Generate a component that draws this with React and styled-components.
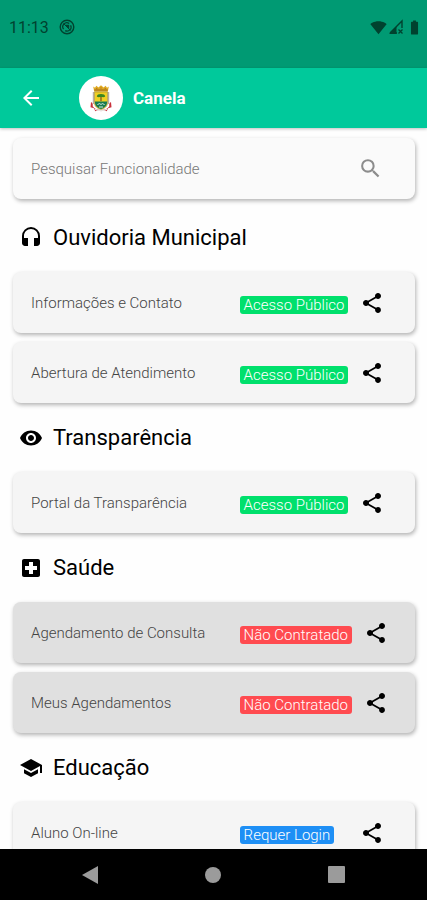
import styled, { createGlobalStyle } from 'styled-components'
import {
    MdArrowBack,
    MdBatteryFull,
    MdHeadset,
    MdLocalHospital,
    MdSchool,
    MdSearch,
    MdShare,
    MdSignalWifi4Bar,
    MdVisibility,
} from 'react-icons/md'

const GlobalStyle = createGlobalStyle`
    * {
        box-sizing: border-box;
    }
    body {
        margin: 0;
        background: #fefefe;
        font-family: Roboto, sans-serif;
        color: #000;
    }
    button {
        display: flex;
        align-items: center;
        justify-content: center;
        padding: 0;
        border: 0;
        background: none;
        color: inherit;
        cursor: pointer;
    }
`

const Screen = styled.div`
    display: flex;
    flex-direction: column;
    height: 100vh;
`

const StatusBar = styled.div`
    display: flex;
    align-items: flex-start;
    flex-shrink: 0;
    height: 68px;
    padding: 18px 4px 0 9px;
    background: #009a73;
    color: #00422f;
    font-size: 16px;
    line-height: 20px;
`

const StatusIcons = styled.div`
    display: flex;
    align-items: center;
    height: 18px;
    margin-left: ${props => (props.$end ? 'auto' : '10px')};
    gap: 1px;
`

const AppBar = styled.header`
    display: flex;
    align-items: center;
    flex-shrink: 0;
    height: 60px;
    padding: 0 19px;
    background: #00c99b;
    color: #fff;
    box-shadow: 0 1px 3px rgba(0, 0, 0, 0.25);
    z-index: 1;
`

const BackButton = styled.button`
    width: 24px;
    height: 24px;
`

const Avatar = styled.div`
    display: flex;
    align-items: center;
    justify-content: center;
    width: 44px;
    height: 44px;
    margin: 0 10px 0 36px;
    border-radius: 50%;
    background: #fff;
`

const Title = styled.h1`
    margin: 0;
    font-size: 17px;
    font-weight: 700;
    line-height: 24px;
`

const Content = styled.main`
    flex: 1;
    min-height: 0;
    padding: 10px 12px 0 13px;
    overflow-y: auto;
    scrollbar-width: none;
`

const Card = styled.div`
    display: flex;
    align-items: center;
    height: 61px;
    padding: 0 18px;
    border-radius: 8px;
    background: ${props => props.$background || '#f5f5f5'};
    box-shadow: 1px 2px 4px rgba(0, 0, 0, 0.3);
`

const SearchCard = styled(Card)`
    margin-bottom: 4px;
    padding-right: 32px;
    color: #8c8c8c;
`

const SearchInput = styled.input`
    flex: 1;
    min-width: 0;
    padding: 0;
    border: 0;
    outline: 0;
    background: none;
    color: #333;
    font: 300 15px/20px Roboto, sans-serif;

    &::placeholder {
        color: #777;
        opacity: 1;
    }
`

const SectionTitle = styled.h2`
    display: flex;
    align-items: center;
    gap: 10px;
    height: 69px;
    margin: 0;
    padding-left: 6px;
    font-size: 22px;
    font-weight: 400;
    line-height: 28px;
`

const List = styled.ul`
    display: flex;
    flex-direction: column;
    gap: 9px;
    margin: 0;
    padding: 0;
    list-style: none;
`

const Label = styled.span`
    flex: 0 0 57%;
    color: #444;
    font-size: 15px;
    font-weight: 300;
    line-height: 20px;
`

const BadgeSlot = styled.span`
    min-width: 108px;
    padding-top: 5px;
`

const Badge = styled.span`
    display: block;
    width: fit-content;
    padding: 0 4px;
    border-radius: 3px;
    background: ${props => props.$color};
    color: #fff;
    font-size: 15px;
    font-weight: 300;
    line-height: 18px;
    white-space: nowrap;
`

const ShareButton = styled.button`
    flex-shrink: 0;
    width: 24px;
    height: 24px;
    margin-left: 12px;
`

const NavBar = styled.nav`
    display: grid;
    grid-template-columns: repeat(3, 1fr);
    flex-shrink: 0;
    height: 51px;
    padding: 0 28px;
    background: #000;
    color: #9b9b9b;
`

const access = {
    public: { text: 'Acesso Público', color: '#00e06c' },
    unavailable: { text: 'Não Contratado', color: '#ff4b50', background: '#e0e0e0' },
    login: { text: 'Requer Login', color: '#1e8ff5' },
}

const sections = [
    {
        title: 'Ouvidoria Municipal',
        icon: MdHeadset,
        items: [
            { label: 'Informações e Contato', access: 'public' },
            { label: 'Abertura de Atendimento', access: 'public' },
        ],
    },
    {
        title: 'Transparência',
        icon: MdVisibility,
        items: [{ label: 'Portal da Transparência', access: 'public' }],
    },
    {
        title: 'Saúde',
        icon: MdLocalHospital,
        items: [
            { label: 'Agendamento de Consulta', access: 'unavailable' },
            { label: 'Meus Agendamentos', access: 'unavailable' },
        ],
    },
    {
        title: 'Educação',
        icon: MdSchool,
        items: [{ label: 'Aluno On-line', access: 'login' }],
    },
]

const SyncIcon = () => (
    <svg width="16" height="16" viewBox="0 0 16 16" fill="none" stroke="currentColor">
        <circle cx="8" cy="8" r="6.8" strokeWidth="1.4" />
        <path d="M4.6 10.2a4 4 0 0 1 5.6-5.6M11.6 6.2a4 4 0 0 1-5.4 5.4" strokeWidth="1.3" />
        <path d="M6 5.800h4.200V10z" fill="currentColor" stroke="none" />
        <path d="M4.500 4.500l7 7" strokeWidth="1" />
    </svg>
)

const SignalIcon = () => (
    <svg width="17" height="16" viewBox="0 0 17 16" fill="none" stroke="currentColor">
        <path d="M2 14L14 2v7M2 14h7" strokeWidth="1.4" />
        <path d="M1 15l7.500-7.500V15z" fill="currentColor" stroke="none" />
        <path d="M10.500 10.500l4 4M14.500 10.500l-4 4" strokeWidth="1.3" />
    </svg>
)

const Crest = () => (
    <svg width="22" height="27" viewBox="0 0 22 27">
        <path d="M3.2 1.6l1.8 1.2L6.4.8l2 1.7L11 .3l2.6 2.2 2-1.7L17 2.8l1.8-1.2-1 5.2H4.2z" fill="#dfaa22" />
        <path d="M4.4 5h13.2" stroke="#9b651d" />
        <path d="M6 3.6h1.4M10.2 3h1.6M14.6 3.6H16" stroke="#b97820" />
        <path d="M1 17c1.6.8 2 2 1.7 4.2 2 2.9 4.4 3.8 8.3 3.8s6.3-.9 8.3-3.8C19 19 19.4 17.8 21 17l.5 5.2-3.5 1-1.2 3-3.8-1.4-2 1.5-2-1.5-3.8 1.4-1.2-3-3.5-1z" fill="#c9313c" />
        <path d="M2.8 7h1.4v12H2.8zM17.800 7h1.400v12h-1.400z" fill="#b9aca0" />
        <path d="M4.500 7h13v10.500c0 4-2.700 5.900-6.500 7-3.800-1.100-6.500-3-6.500-7z" fill="#f1cf22" stroke="#9d8b39" strokeWidth=".6" />
        <path d="M4.900 16.500h12.200c0 4-2 6-6.100 7.500-4.100-1.500-6.100-3.500-6.100-7.500z" fill="#167a51" />
        <path d="M11 10.500v5.500" stroke="#765323" strokeWidth="1.2" />
        <path d="M6.800 11.500c0-1.700 1.800-2.500 4.200-2.500s4.200.8 4.200 2.500c-1 1-2.500.6-4.200.6s-3.200.4-4.200-.6z" fill="#3a8620" />
        <path d="M7.500 20c1.200-1.800 2.200-1.800 3.500-.4 1.300-1.400 2.300-1.400 3.500.4M9 22h4" stroke="#d8e8db" fill="none" />
        <path d="M5 24.300c3 1.800 9 1.800 12 0" stroke="#e9e2df" strokeWidth="1.2" fill="none" />
    </svg>
)

function ServiceItem({ label, type }) {
    return (
        <Card as="li" $background={type.background}>
            <Label>{label}</Label>
            <BadgeSlot>
                <Badge $color={type.color}>{type.text}</Badge>
            </BadgeSlot>
            <ShareButton aria-label={`Compartilhar ${label}`}>
                <MdShare size={24} />
            </ShareButton>
        </Card>
    )
}

export default function App() {
    return (
        <Screen>
            <GlobalStyle />
            <StatusBar>
                <span>11:13</span>
                <StatusIcons>
                    <SyncIcon />
                </StatusIcons>
                <StatusIcons $end>
                    <MdSignalWifi4Bar size={17} />
                    <SignalIcon />
                    <MdBatteryFull size={17} />
                </StatusIcons>
            </StatusBar>
            <AppBar>
                <BackButton aria-label="Voltar">
                    <MdArrowBack size={26} />
                </BackButton>
                <Avatar>
                    <Crest />
                </Avatar>
                <Title>Canela</Title>
            </AppBar>
            <Content>
                <SearchCard $background="#fafafa">
                    <SearchInput
                        type="text"
                        aria-label="Pesquisar Funcionalidade"
                        placeholder="Pesquisar Funcionalidade"
                    />
                    <MdSearch size={25} />
                </SearchCard>
                {sections.map(({ title, icon: Icon, items }) => (
                    <section key={title}>
                        <SectionTitle>
                            <Icon size={24} />
                            {title}
                        </SectionTitle>
                        <List>
                            {items.map(item => (
                                <ServiceItem key={item.label} label={item.label} type={access[item.access]} />
                            ))}
                        </List>
                    </section>
                ))}
            </Content>
            <NavBar>
                <button aria-label="Retornar">
                    <svg width="18" height="18" viewBox="0 0 18 18" fill="currentColor">
                        <path d="M1 9L17 0v18z" />
                    </svg>
                </button>
                <button aria-label="Início">
                    <svg width="18" height="18" viewBox="0 0 18 18" fill="currentColor">
                        <circle cx="9" cy="9" r="8" />
                    </svg>
                </button>
                <button aria-label="Recentes">
                    <svg width="18" height="18" viewBox="0 0 18 18" fill="currentColor">
                        <rect x="0" y="0" width="17" height="17" rx="1" />
                    </svg>
                </button>
            </NavBar>
        </Screen>
    )
}
